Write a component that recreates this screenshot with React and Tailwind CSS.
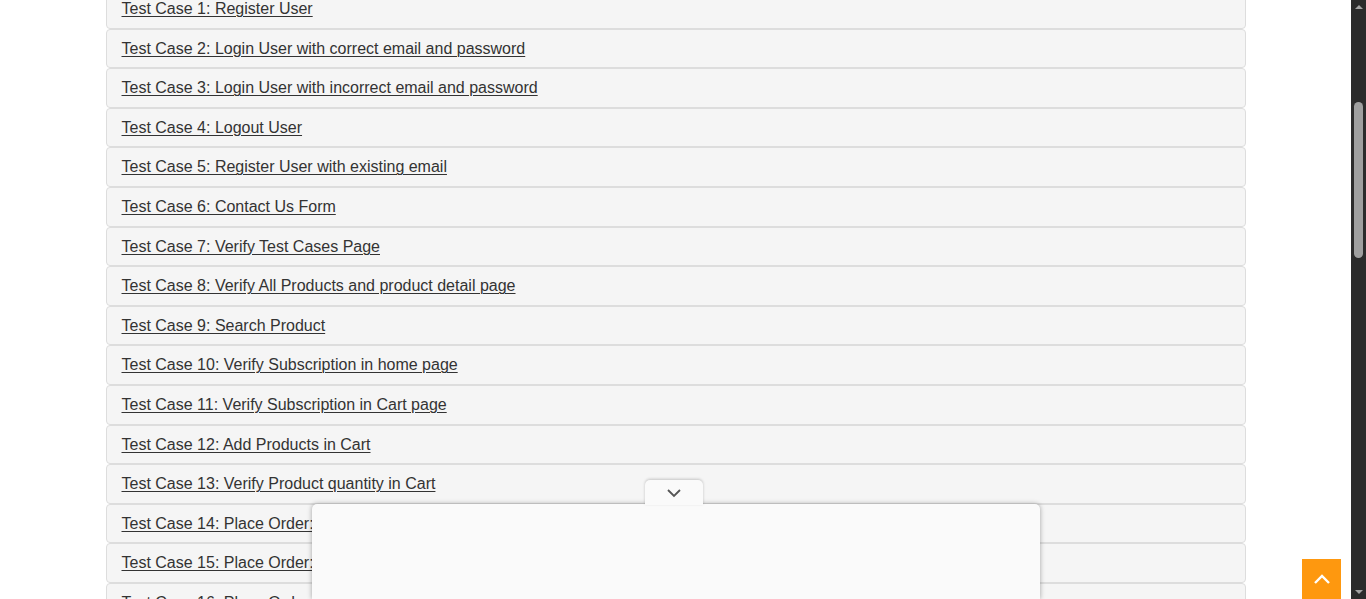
import React from "react";

const cases = [
  "Test Case 1: Register User",
  "Test Case 2: Login User with correct email and password",
  "Test Case 3: Login User with incorrect email and password",
  "Test Case 4: Logout User",
  "Test Case 5: Register User with existing email",
  "Test Case 6: Contact Us Form",
  "Test Case 7: Verify Test Cases Page",
  "Test Case 8: Verify All Products and product detail page",
  "Test Case 9: Search Product",
  "Test Case 10: Verify Subscription in home page",
  "Test Case 11: Verify Subscription in Cart page",
  "Test Case 12: Add Products in Cart",
  "Test Case 13: Verify Product quantity in Cart",
  "Test Case 14: Place Order: Register while Checkout",
  "Test Case 15: Place Order: Register before Checkout",
  "Test Case 16: Place Order: Login before Checkout",
  "Test Case 17: Remove Products From Cart",
];

export default function App() {
  return (
    <div className="relative flex h-[599px] w-[1366px] overflow-hidden bg-white font-['Liberation_Sans',Arial,sans-serif]">
      {/* Page */}
      <div className="relative flex-1 overflow-hidden">
        <div className="mx-auto mt-[-11px] w-[1140px]">
          {cases.map((c) => (
            <div
              key={c}
              className="h-[39.6px] rounded-[4px] border border-[#dddddd] bg-[#f5f5f5] px-[15px] py-[10px]"
            >
              <a
                href="#"
                className="block text-[16px] leading-[17.6px] text-[#333333] underline decoration-1 underline-offset-[2px]"
              >
                {c}
              </a>
            </div>
          ))}
        </div>

        {/* Ad overlay */}
        <div className="absolute bottom-0 left-[312px] flex h-[119px] w-[728px] flex-col">
          <div className="relative z-10 ml-[333px] flex h-[25px] w-[58px] items-center justify-center rounded-t-[5px] bg-[#fafafa] shadow-[0_-1px_3px_rgba(0,0,0,0.2)]">
            <svg width="16" height="10" viewBox="0 0 16 10" fill="none">
              <path d="M2 2l6 6 6-6" stroke="#555" strokeWidth="1.8" />
            </svg>
          </div>
          <div className="-mt-px flex-1 rounded-t-[5px] bg-[#fafafa] shadow-[0_0_5px_rgba(0,0,0,0.35)]" />
        </div>

        {/* Scroll up */}
        <a
          href="#"
          className="absolute bottom-0 right-[10px] flex h-[40px] w-[39px] items-center justify-center bg-[#fe980f]"
        >
          <svg width="18" height="11" viewBox="0 0 18 11" fill="none">
            <path d="M2 9l7-7 7 7" stroke="#fff" strokeWidth="2.4" />
          </svg>
        </a>
      </div>

      {/* Scrollbar */}
      <div className="flex w-[15px] flex-col items-center bg-[#2b2b2b] py-[5px]">
        <div className="h-0 w-0 border-x-[4.5px] border-b-[4px] border-x-transparent border-b-[#a3a3a3]" />
        <div className="mt-[93px] h-[156px] w-[9px] rounded-full bg-[#9f9f9f]" />
        <div className="flex-1" />
        <div className="h-0 w-0 border-x-[4.5px] border-t-[4px] border-x-transparent border-t-[#a3a3a3]" />
      </div>
    </div>
  );
}
